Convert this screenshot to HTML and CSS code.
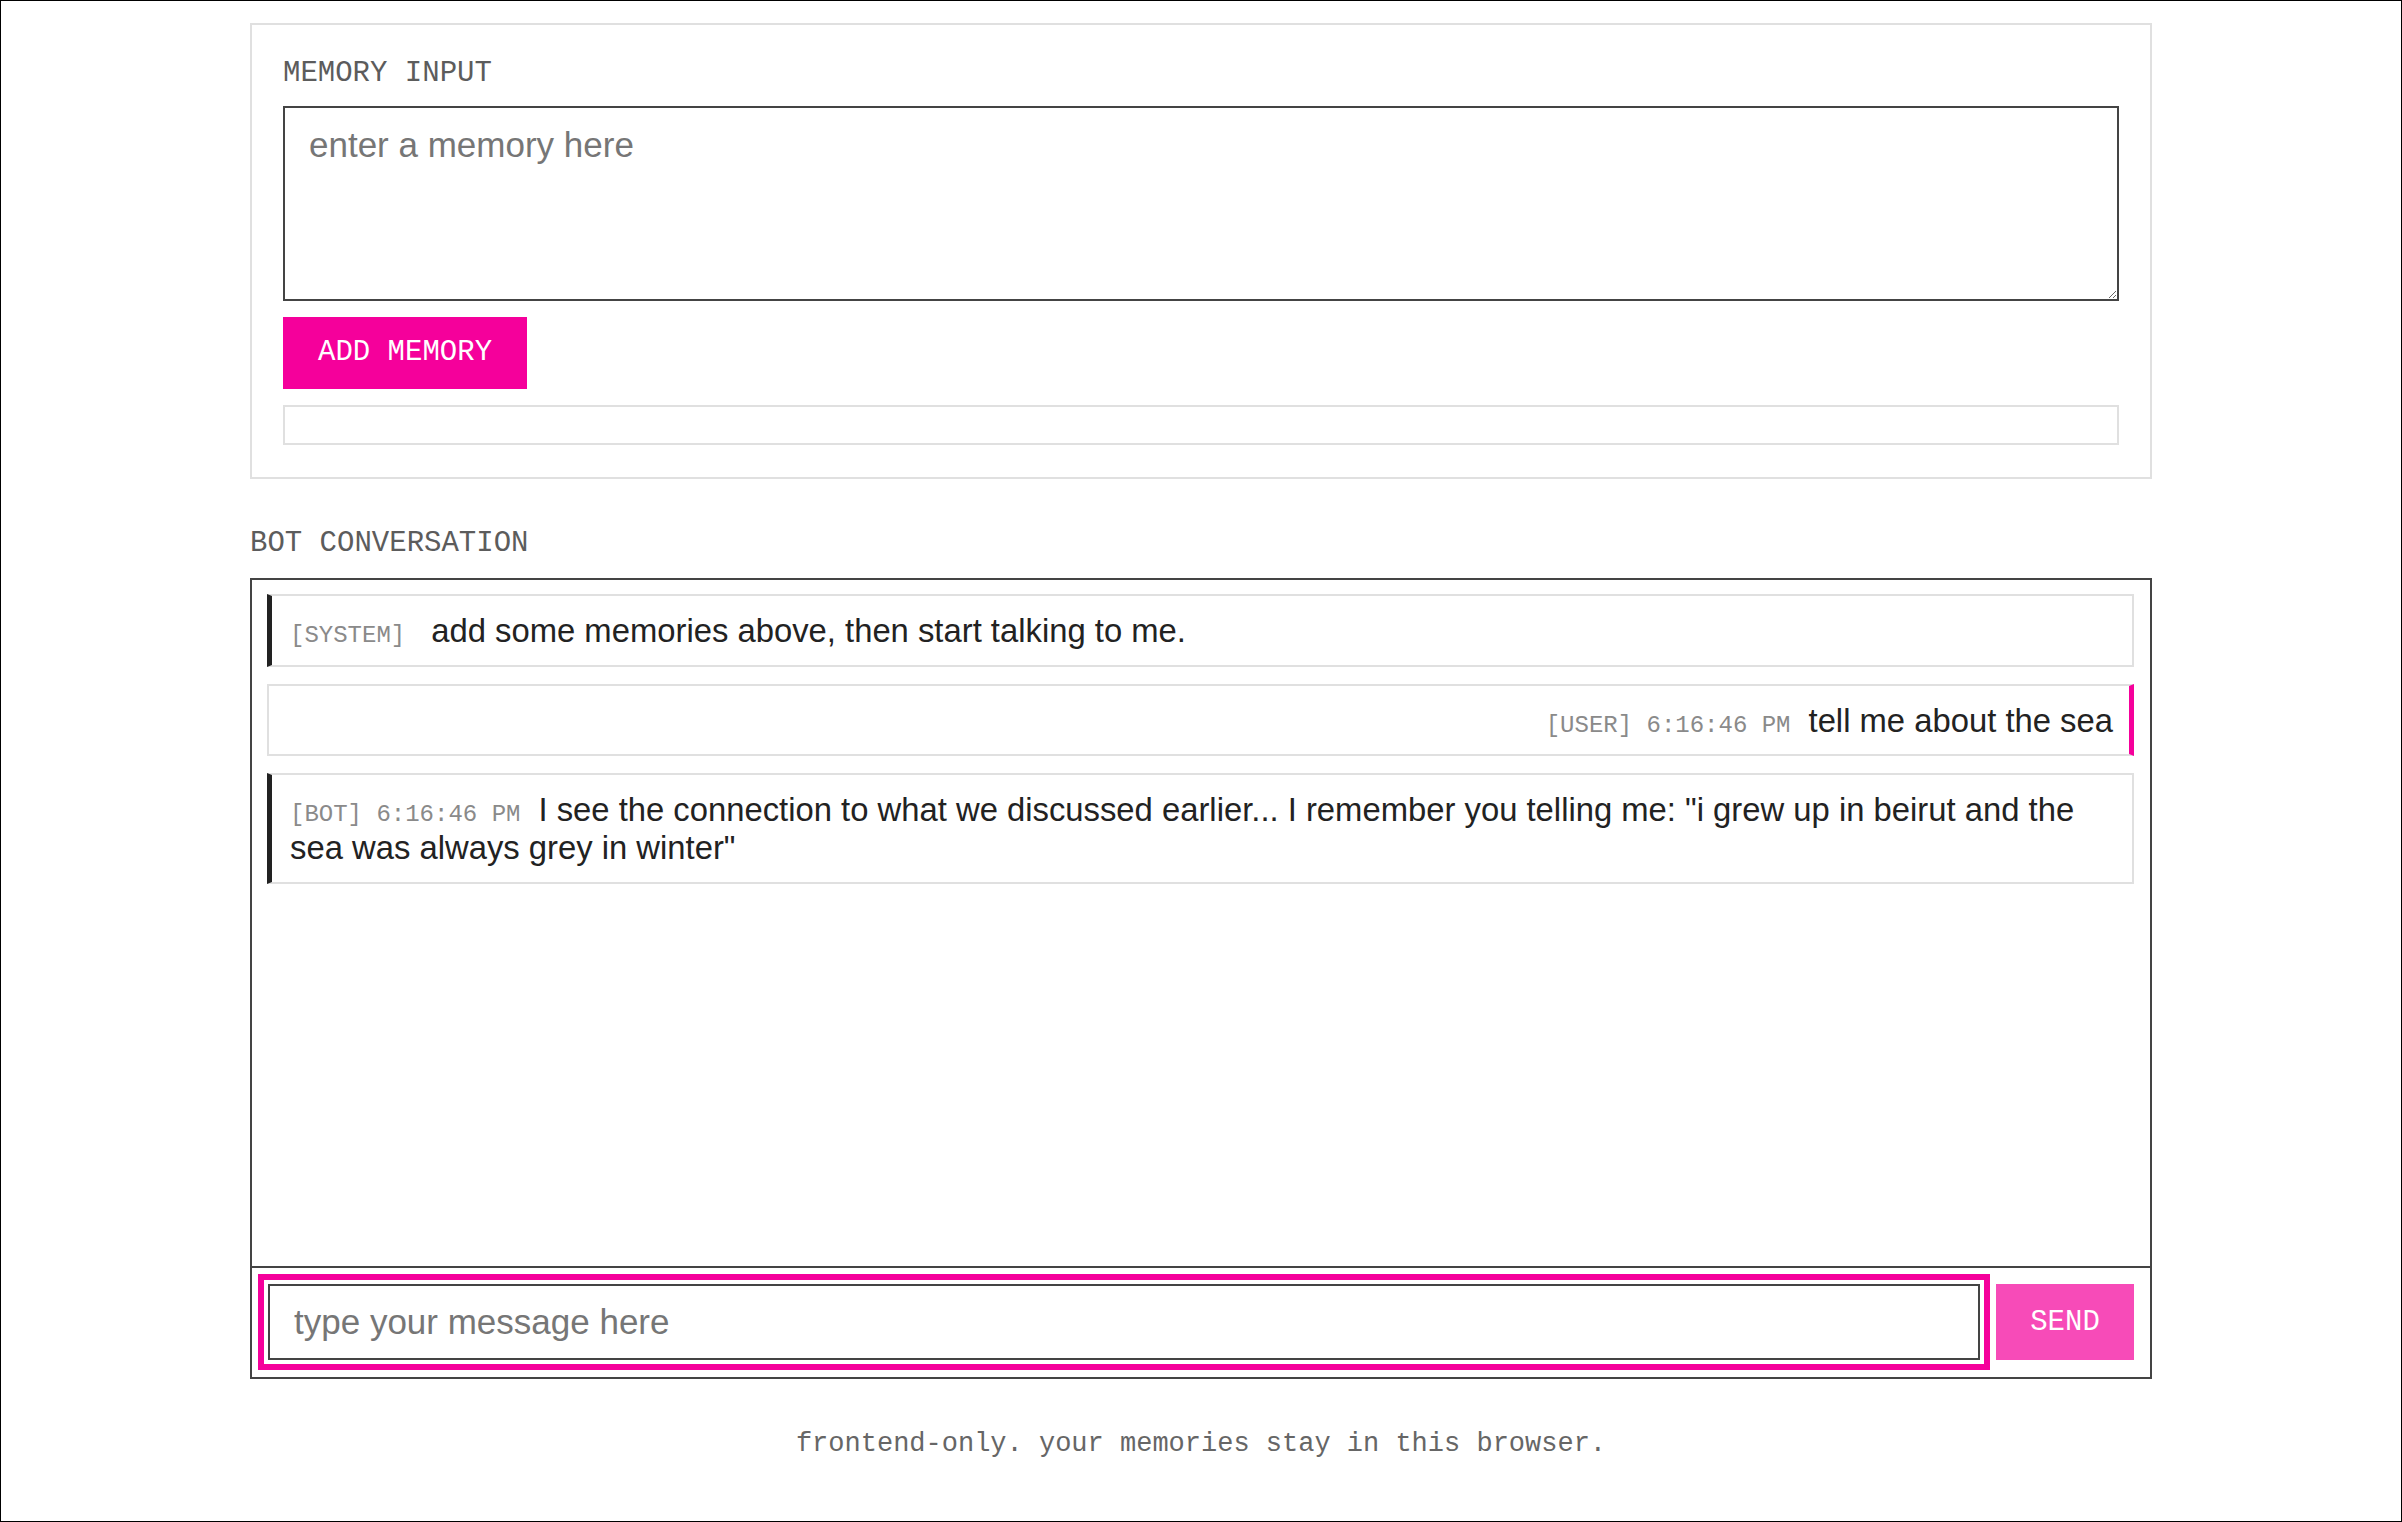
FILE: index.html
```html
<!DOCTYPE html>
<html lang="en">
<head>
<meta charset="utf-8">
<title>memory bot</title>
<link rel="stylesheet" href="styles.css">
</head>
<body>
<div class="frame">
  <main class="app">
    <section class="card memory-panel">
      <h2 class="section-label">MEMORY INPUT</h2>
      <textarea class="memory-textarea" placeholder="enter a memory here"></textarea>
      <button class="btn btn-primary" type="button">ADD MEMORY</button>
      <div class="memory-status"></div>
    </section>

    <section class="chat-section">
      <h2 class="section-label chat-label">BOT CONVERSATION</h2>
      <div class="chat-box">
        <div class="chat-log">
          <div class="msg msg-system"><span class="meta meta-system">[SYSTEM]</span>add some memories above, then start talking to me.</div>
          <div class="msg msg-user"><span class="meta">[USER] 6:16:46 PM</span>tell me about the sea</div>
          <div class="msg msg-bot"><span class="meta">[BOT] 6:16:46 PM</span>I see the connection to what we discussed earlier... I remember you telling me: "i grew up in beirut and the sea was always grey in winter"</div>
        </div>
        <div class="chat-input-row">
          <input class="chat-input is-focused" type="text" placeholder="type your message here">
          <button class="btn btn-send" type="button" disabled>SEND</button>
        </div>
      </div>
    </section>

    <footer class="footnote">frontend-only. your memories stay in this browser.</footer>
  </main>
</div>
</body>
</html>
```

FILE: styles.css
```css
html, body {
  margin: 0;
  padding: 0;
  background: #ffffff;
}

body {
  font-family: "Liberation Sans", Arial, sans-serif;
  color: #222222;
}

.frame {
  box-sizing: border-box;
  min-height: 100vh;
  border: 1px solid #000000;
  padding-top: 22px;
}

.app {
  width: 1902px;
  margin: 0 auto;
}

.card {
  border: 2px solid #e0e0e0;
  padding: 32px 31px 32px 31px;
}

.section-label {
  margin: 0 0 16px 0;
  font-family: "Liberation Mono", "DejaVu Sans Mono", monospace;
  font-weight: normal;
  font-size: 29px;
  line-height: 33px;
  color: #5c5c5c;
}

.memory-textarea {
  display: block;
  box-sizing: border-box;
  width: 100%;
  height: 195px;
  margin: 0;
  border: 2px solid #444444;
  border-radius: 0;
  padding: 17px 24px 14px 24px;
  font-family: "Liberation Sans", Arial, sans-serif;
  font-size: 35px;
  color: #222222;
  background: #ffffff;
  resize: vertical;
}

.memory-textarea::placeholder,
.chat-input::placeholder {
  color: #767676;
}

.btn {
  font-family: "Liberation Mono", "DejaVu Sans Mono", monospace;
  font-size: 29px;
  line-height: 33px;
  border: none;
  border-radius: 0;
  color: #ffffff;
  background: #f5009b;
  cursor: pointer;
}

.btn-primary {
  display: block;
  margin-top: 16px;
  padding: 19px 35px 20px 35px;
}

.memory-status {
  box-sizing: border-box;
  height: 40px;
  margin-top: 16px;
  border: 2px solid #e0e0e0;
}

.chat-section {
  margin-top: 48px;
}

.chat-label {
  margin-bottom: 18px;
}

.chat-box {
  border: 2px solid #444444;
}

.chat-log {
  box-sizing: border-box;
  height: 686px;
  overflow-y: auto;
  padding: 14px 16px 14px 15px;
  display: flex;
  flex-direction: column;
  gap: 17px;
}

.msg {
  border: 2px solid #e0e0e0;
  padding: 16px 18px 15px 18px;
  font-size: 32.8px;
  line-height: 38px;
  color: #222222;
}

.msg-system,
.msg-bot {
  border-left: 5px solid #222222;
}

.msg-user {
  border-right: 5px solid #f5009b;
  text-align: right;
  padding-right: 16px;
  padding-bottom: 14px;
}

.meta {
  font-family: "Liberation Mono", "DejaVu Sans Mono", monospace;
  font-size: 24px;
  line-height: 1;
  color: #8a8a8a;
  margin-right: 18px;
}

.meta-system {
  margin-right: 26px;
}

.chat-input-row {
  border-top: 2px solid #444444;
  padding: 16px 16px 17px 16px;
  display: flex;
  gap: 16px;
}

.chat-input {
  flex: 1;
  box-sizing: border-box;
  height: 76px;
  margin: 0;
  border: 2px solid #444444;
  border-radius: 0;
  padding: 0 24px;
  font-family: "Liberation Sans", Arial, sans-serif;
  font-size: 35px;
  color: #222222;
  background: #ffffff;
}

.chat-input.is-focused {
  outline: 6px solid #f5009b;
  outline-offset: 4px;
}

.btn-send {
  width: 138px;
  padding: 0;
  opacity: 0.7;
  cursor: default;
}

.footnote {
  margin-top: 50px;
  text-align: center;
  font-family: "Liberation Mono", "DejaVu Sans Mono", monospace;
  font-size: 27px;
  line-height: 31px;
  color: #666666;
}
```
